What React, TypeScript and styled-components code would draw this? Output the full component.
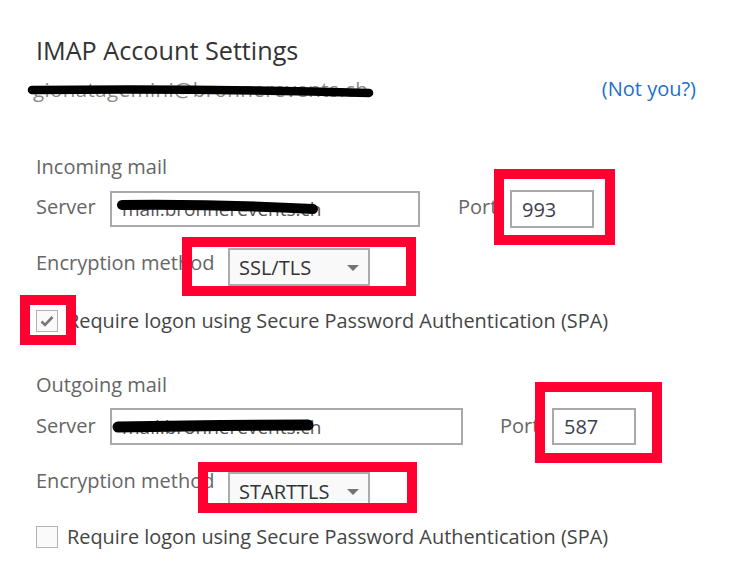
import React from "react";
import styled, { createGlobalStyle } from "styled-components";

const Global = createGlobalStyle`
  html, body { margin: 0; padding: 0; background: #ffffff; }
  body { font-family: "Open Sans", "Noto Sans", "Liberation Sans", sans-serif; }
  * { box-sizing: border-box; }
`;

const Page = styled.div`
  position: relative;
  width: 733px;
  height: 565px;
  overflow: hidden;
  padding: 34px 37px 0 36px;
  background: #ffffff;
`;

const Title = styled.h1`
  margin: 0;
  height: 32px;
  font-size: 25.2px;
  line-height: 32px;
  font-weight: 400;
  color: #333333;
  white-space: nowrap;
`;

const AccountRow = styled.div`
  margin-top: 9px;
  height: 28px;
  display: flex;
  justify-content: space-between;
  align-items: center;
`;

const Email = styled.span`
  margin-left: -3px;
  font-size: 20.5px;
  letter-spacing: 0.4px;
  line-height: 28px;
  color: #8a8a8a;
`;

const NotYou = styled.a`
  font-size: 20px;
  line-height: 28px;
  color: #1e6fc8;
  text-decoration: none;
  cursor: pointer;
`;

const SectionTitle = styled.div<{ $mt: number }>`
  margin-top: ${(p) => p.$mt}px;
  height: 28px;
  font-size: 20px;
  line-height: 28px;
  color: #666666;
`;

const Row = styled.div<{ $mt: number }>`
  margin-top: ${(p) => p.$mt}px;
  display: flex;
  align-items: flex-start;
`;

const Label = styled.span<{ $w: number; $mt?: number; $ml?: number }>`
  flex: none;
  width: ${(p) => p.$w}px;
  margin-top: ${(p) => p.$mt ?? 0}px;
  margin-left: ${(p) => p.$ml ?? 0}px;
  font-size: 20px;
  line-height: 28px;
  color: #666666;
  white-space: nowrap;
`;

const TextBox = styled.div<{ $w: number; $h: number; $mt?: number }>`
  flex: none;
  width: ${(p) => p.$w}px;
  height: ${(p) => p.$h}px;
  margin-top: ${(p) => p.$mt ?? 0}px;
  border: 2px solid #a9a9a9;
  background: #ffffff;
  padding-left: 10px;
  display: flex;
  align-items: center;
  font-size: 19px;
  color: #555555;
  white-space: nowrap;
  overflow: hidden;
`;

const PortValue = styled.span`
  font-size: 20px;
  color: #3b3f4c;
`;

const Select = styled.div<{ $mt?: number }>`
  flex: none;
  width: 142px;
  height: 38px;
  margin-top: ${(p) => p.$mt ?? 0}px;
  border: 2px solid #ababab;
  background: #f9f9f9;
  padding: 0 8px 0 9px;
  display: flex;
  align-items: center;
  justify-content: space-between;
  font-size: 20px;
  color: #333333;
`;

const Caret = styled.span`
  width: 0;
  height: 0;
  border-left: 6px solid transparent;
  border-right: 6px solid transparent;
  border-top: 6px solid #737373;
  margin: 1px 1px 0 0;
`;

const CheckRow = styled.label<{ $mt: number }>`
  margin-top: ${(p) => p.$mt}px;
  height: 22px;
  display: flex;
  align-items: center;
  gap: 9px;
  cursor: pointer;
`;

const Box = styled.span`
  flex: none;
  width: 22px;
  height: 22px;
  border: 1px solid #b4b4b4;
  background: #fafafa;
  display: flex;
  align-items: center;
  justify-content: center;
`;

const CheckText = styled.span`
  font-size: 19.9px;
  line-height: 28px;
  color: #454545;
  white-space: nowrap;
`;

const Marker = styled.div<{ $x: number; $y: number; $w: number; $h: number }>`
  position: absolute;
  left: ${(p) => p.$x}px;
  top: ${(p) => p.$y}px;
  width: ${(p) => p.$w}px;
  height: ${(p) => p.$h}px;
  border: 10px solid #ff0030;
  pointer-events: none;
`;

const Scribbles = styled.svg`
  position: absolute;
  left: 0;
  top: 0;
  width: 733px;
  height: 565px;
  pointer-events: none;
`;

function Checkbox({ checked }: { checked: boolean }) {
  return (
    <Box>
      {checked && (
        <svg width="16" height="16" viewBox="0 0 16 16">
          <polyline
            points="2.5,8.5 6,12 13.5,4"
            fill="none"
            stroke="#787878"
            strokeWidth="2.6"
          />
        </svg>
      )}
    </Box>
  );
}

export default function App() {
  return (
    <>
      <Global />
      <Page>
        <Title>IMAP Account Settings</Title>
        <AccountRow>
          <Email>gionatagemini@bronnerevents.ch</Email>
          <NotYou>(Not you?)</NotYou>
        </AccountRow>

        <SectionTitle $mt={50}>Incoming mail</SectionTitle>
        <Row $mt={10}>
          <Label $w={74} $mt={2}>Server</Label>
          <TextBox $w={310} $h={36}>mail.bronnerevents.ch</TextBox>
          <Label $w={52} $ml={38} $mt={2}>Port</Label>
          <TextBox $w={84} $h={38} $mt={-1}>
            <PortValue>993</PortValue>
          </TextBox>
        </Row>
        <Row $mt={20}>
          <Label $w={192} $mt={1}>Encryption method</Label>
          <Select>
            SSL/TLS
            <Caret />
          </Select>
        </Row>
        <CheckRow $mt={24}>
          <Checkbox checked />
          <CheckText>Require logon using Secure Password Authentication (SPA)</CheckText>
        </CheckRow>

        <SectionTitle $mt={39}>Outgoing mail</SectionTitle>
        <Row $mt={9}>
          <Label $w={74} $mt={4}>Server</Label>
          <TextBox $w={353} $h={37}>mail.bronnerevents.ch</TextBox>
          <Label $w={52} $ml={37} $mt={4}>Port</Label>
          <TextBox $w={84} $h={37}>
            <PortValue>587</PortValue>
          </TextBox>
        </Row>
        <Row $mt={22}>
          <Label $w={192}>Encryption method</Label>
          <Select $mt={5}>
            STARTTLS
            <Caret />
          </Select>
        </Row>
        <CheckRow $mt={16}>
          <Checkbox checked={false} />
          <CheckText>Require logon using Secure Password Authentication (SPA)</CheckText>
        </CheckRow>

        <Scribbles viewBox="0 0 733 565">
          <path d="M32 90 Q 200 88 369 93" stroke="#000" strokeWidth="8.5" strokeLinecap="round" fill="none" />
          <path d="M122 205 Q 220 204 313 209" stroke="#000" strokeWidth="10" strokeLinecap="round" fill="none" />
          <path d="M118 427 Q 210 425 308 425" stroke="#000" strokeWidth="11" strokeLinecap="round" fill="none" />
        </Scribbles>

        <Marker $x={494} $y={169} $w={121} $h={76} />
        <Marker $x={182} $y={237} $w={234} $h={59} />
        <Marker $x={20} $y={295} $w={56} $h={50} />
        <Marker $x={535} $y={382} $w={127} $h={81} />
        <Marker $x={198} $y={462} $w={219} $h={51} />
      </Page>
    </>
  );
}
